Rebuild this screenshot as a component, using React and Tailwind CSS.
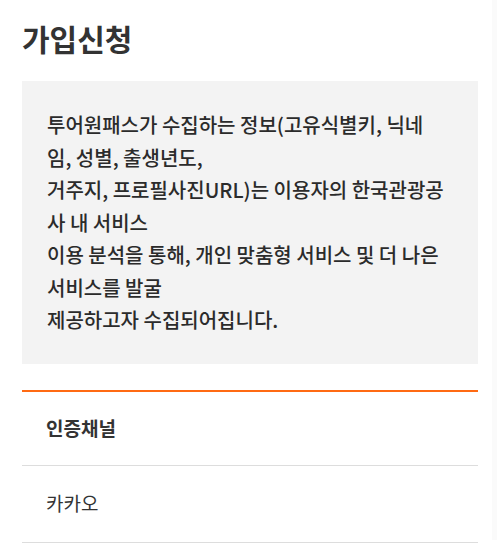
import React from "react";

// 화면에 보이는 줄바꿈 그대로
const lines = [
  "투어원패스가 수집하는 정보(고유식별키, 닉네",
  "임, 성별, 출생년도,",
  "거주지, 프로필사진URL)는 이용자의 한국관광공",
  "사 내 서비스",
  "이용 분석을 통해, 개인 맞춤형 서비스 및 더 나은",
  "서비스를 발굴",
  "제공하고자 수집되어집니다.",
];

const App = () => {
  return (
    <div
      className="flex min-h-[545px] bg-white text-[#333333]"
      style={{ fontFamily: '"Noto Sans CJK KR", "Noto Sans", sans-serif' }}
    >
      <div className="w-[478px] pl-[22px] pt-[16px]">
        {/* 제목 */}
        <h1 className="text-[30px] font-bold leading-[44px]">가입신청</h1>

        {/* 안내 박스 */}
        <div className="mt-[21px] bg-[#f3f3f3] pl-[25px] pr-[20px] pt-[28px] pb-[27px] text-[20px] font-medium leading-[32.5px] text-[#2b2b2b]">
          {lines.map((line, i) => (
            <p key={i} className="whitespace-nowrap">
              {line}
            </p>
          ))}
        </div>

        {/* 인증채널 */}
        <div className="mt-[26px] border-t-2 border-[#ff6a13]">
          <div className="flex h-[74px] items-center border-b border-[#dddddd] px-[24px] text-[19px] font-bold">
            인증채널
          </div>
          <div className="flex h-[77px] items-center border-b border-[#dddddd] px-[24px] text-[19px]">
            카카오
          </div>
        </div>
      </div>
      <div className="ml-[14px] mb-[5px] w-[5px] bg-[#fafafa]" />
    </div>
  );
};

export default App;
